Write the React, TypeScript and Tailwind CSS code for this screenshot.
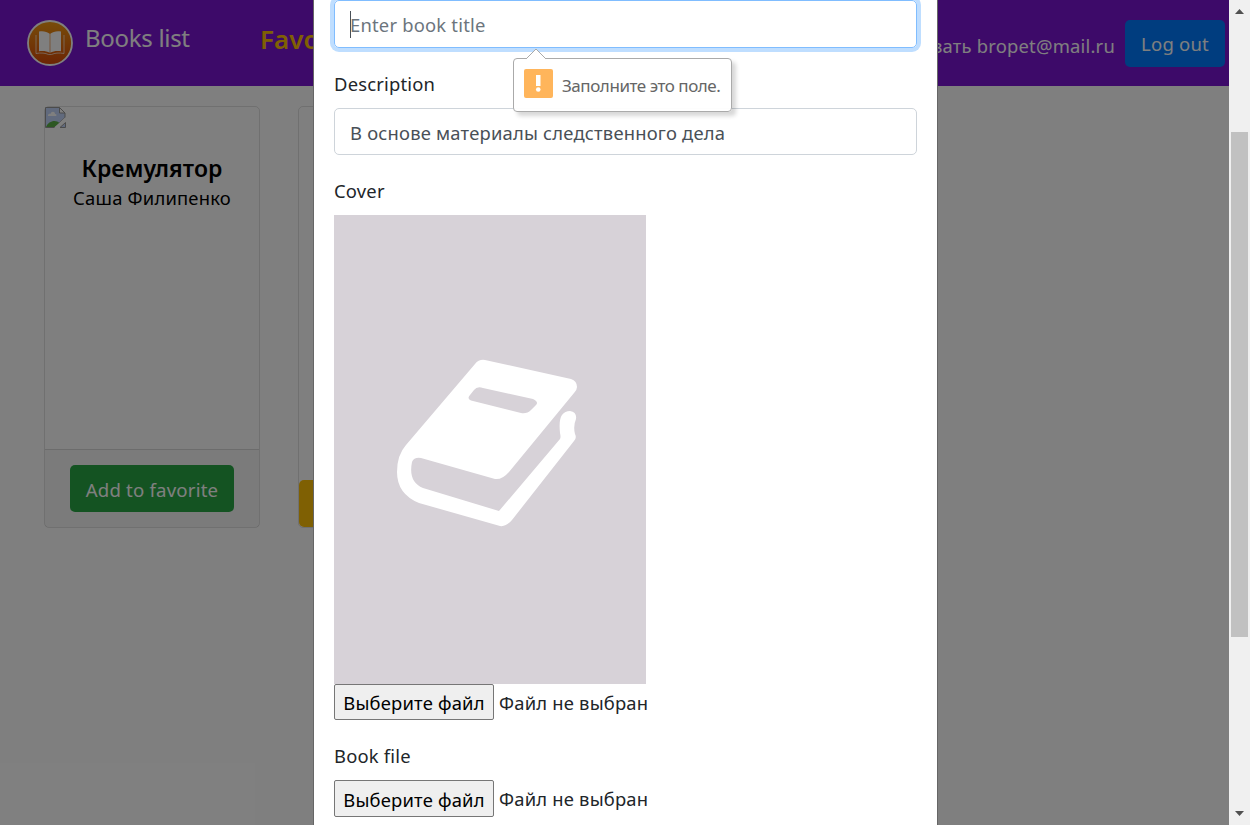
import React from "react";

function Logo() {
  return (
    <svg className="h-[46px] w-[46px] shrink-0" viewBox="0 0 46 46">
      <defs>
        <linearGradient id="logoFill" x1="0" y1="0" x2="0" y2="1">
          <stop offset="0" stopColor="#f09a14" />
          <stop offset="1" stopColor="#d84808" />
        </linearGradient>
      </defs>
      <circle cx="23" cy="23" r="22" fill="url(#logoFill)" stroke="#fff" strokeWidth="1.800" />
      <path d="M9 15v18.500c5-1 9.500-.4 12.500 1h3c3-1.400 7.500-2 12.500-1V15" fill="none" stroke="#fff" strokeWidth=".8" opacity=".8" />
      <path d="M12 11.500c4-.8 8 0 10.700 2.200v19c-3-1.600-7-2.200-10.700-1.400z" fill="#fff" />
      <path d="M34 11.500c-4-.8-8 0-10.700 2.200v19c3-1.600 7-2.200 10.700-1.400z" fill="#fff" />
    </svg>
  );
}

function BrokenImage() {
  return (
    <svg className="block h-[21px] w-[21px]" viewBox="0 0 21 21">
      <path d="M.5.500h14l5.500 5.500v4.500L9 20.500H.500z" fill="#c3d5fb" stroke="#969696" />
      <path d="M14.500.500v5.500H20z" fill="#fff" stroke="#969696" />
      <path d="M3 8.500c0-2 2-2 2.500-1.500C6 4 10 4 10 7c2 0 2 2 .5 2H3z" fill="#fff" />
      <path d="M1 20c2-6 10-8 13.500-4L10 20z" fill="#5aaf46" />
      <path d="M15 20.500h5.500v-5z" fill="#c3d5fb" stroke="#969696" />
      <path d="M10.500 21L21 11.500" stroke="#fff" strokeWidth="2.500" />
    </svg>
  );
}

function Page() {
  return (
    <div className="h-full bg-white">
      <header className="flex h-[86px] bg-[#7b14d3] text-white">
        <div className="shrink-0 pt-5 pl-[27px]">
          <Logo />
        </div>
        <div className="w-[187px] shrink-0 pt-[20px] pl-3 text-[24px] leading-9 tracking-[-0.3px]">Books list</div>
        <div className="pt-[21px] text-[26px] leading-9 font-semibold text-[#ffc107]">Favo</div>
        <div className="ml-auto flex pt-5 pr-1 whitespace-nowrap">
          <span className="mr-[10px] pt-3 text-[18.4px] leading-7 tracking-[0.2px]">Добро пожаловать bropet@mail.ru</span>
          <button className="h-[47px] w-[100px] rounded-[5px] bg-[#007bff] text-[18.5px] tracking-[0.2px]">Log out</button>
        </div>
      </header>
      <main className="flex gap-[38px] pt-5 pl-11">
        <article className="flex h-[422px] w-[216px] flex-col rounded-[5px] border border-black/12 text-center text-black">
          <BrokenImage />
          <div className="flex-1 pt-[25px]">
            <h2 className="text-[23px] leading-[31px] font-semibold tracking-[0.1px]">Кремулятор</h2>
            <p className="text-[18.4px] leading-[28px] tracking-[0.2px]">Саша Филипенко</p>
          </div>
          <footer className="flex h-[78px] items-start justify-center border-t border-black/12 bg-black/[0.03] pt-[15px]">
            <button className="h-[47px] w-[164px] rounded-[5px] bg-[#28a745] pt-[2px] text-[18.6px] tracking-[0.2px] text-white">Add to favorite</button>
          </footer>
        </article>
        <article className="flex h-[422px] w-[216px] flex-col justify-end rounded-[5px] border border-black/12">
          <div className="h-[47px] rounded-[5px] bg-[#ffc107]" />
        </article>
      </main>
    </div>
  );
}

function BookCover() {
  return (
    <div className="h-[469px] w-[312px] bg-[#d7d2d8]">
      <svg className="block h-full w-full" viewBox="0 0 312 469">
        <path
          d="M141 149Q145 144 151 145L237 164Q243 166 243 172Q243 175 240 178L175 257Q168 265 161 264L87 243Q80 242 78 247Q74 267 89 273L165 296L226 224Q227 222 226 218C225 208 226 203 228 200Q231 196 236 196Q243 197 242 204Q239 211 241 219Q243 223 240 226L178 305Q172 312 166 311L85 288Q63 279 63 257Q63 240 72 230Z"
          transform="translate(0 0)"
          fill="#fff"
        />
        <path d="M140 175Q143 171 149 173L199 184Q205 187 202 190L197 195Q193 199 187 198L139 186Q132 184 136 180Z" fill="#d7d2d8" />
      </svg>
    </div>
  );
}

function FilePicker({ tall = false }: { tall?: boolean }) {
  return (
    <div className="flex items-center">
      <button className={`${tall ? "h-[37px] pt-[2px]" : "h-[36px] pt-px"} w-[160px] rounded-[2px] border border-[#767676] bg-[#efefef] text-[18.4px] tracking-[0.2px] whitespace-nowrap text-black`}>
        Выберите файл
      </button>
      <span className={`${tall ? "" : "pt-[2px]"} ml-[5px] text-[18.4px] leading-7 tracking-[0.2px]`}>Файл не выбран</span>
    </div>
  );
}

function ValidationTip() {
  return (
    <div className="absolute top-[58px] left-[199px] flex h-[54px] w-[219px] rounded-[4px] border border-[#aaa] bg-white/95 pt-[10px] pl-[10px] shadow-[4px_4px_4px_rgba(0,0,0,0.16)]">
      <svg className="absolute -top-[11px] left-[11px] h-3 w-[22px]" viewBox="0 0 22 12">
        <path d="M1 12V11L11 1l10 10v1z" fill="#fff" />
        <path d="M1 11L11 1l10 10" fill="none" stroke="#aaa" />
      </svg>
      <svg className="h-[29px] w-[29px]" viewBox="0 0 29 29">
        <rect width="29" height="29" rx="2" fill="#ffb55b" />
        <path d="M12 6h4.500v11H12z" fill="#fff" />
        <circle cx="14.250" cy="20.500" r="2.300" fill="#fff" />
      </svg>
      <span className="pt-[5px] pl-[9px] text-[17px] leading-6 tracking-[-0.45px] whitespace-nowrap text-[#666]">Заполните это поле.</span>
    </div>
  );
}

function BookDialog() {
  return (
    <section className="absolute top-0 left-[313px] h-[825px] w-[625px] overflow-hidden border-x border-[#666] bg-white px-5 text-[18.4px] leading-[29px] tracking-[0.2px] text-[#212529]">
      <div className="flex h-12 items-center rounded-[5px] border border-[#80bdff] pl-[15px] text-[#6c757d] shadow-[0_0_0_4px_#bfdeff]">
        <span className="-mr-px h-[27px] w-px bg-[#495057]" />
        <span className="pt-px">Enter book title</span>
      </div>
      <div className="mt-[21px]">Description</div>
      <div className="mt-[10px] flex h-[47px] items-center rounded-[5px] border border-[#ced4da] pt-px pl-[15px] text-[#495057]">
        В основе материалы следственного дела
      </div>
      <div className="mt-[21px] mb-[10px]">Cover</div>
      <BookCover />
      <FilePicker />
      <div className="mt-[21px] mb-[10px]">Book file</div>
      <FilePicker tall />
      <ValidationTip />
    </section>
  );
}

function Scrollbar() {
  return (
    <div className="flex h-full w-[21px] flex-col items-center justify-between bg-[#f0f0f0]">
      <svg className="h-[132px] w-[21px]" viewBox="0 0 21 132">
        <path d="M6 14h9l-4.500-5z" fill="#505050" />
      </svg>
      <div className="mr-[1px] h-[505px] w-[17px] bg-[#c1c1c1]" />
      <svg className="h-[188px] w-[21px]" viewBox="0 0 21 188">
        <path d="M6 174h9l-4.500 5z" fill="#505050" />
      </svg>
    </div>
  );
}

export default function App() {
  return (
    <div className="flex h-[825px] w-[1250px] overflow-hidden font-['Noto_Sans','Open_Sans',sans-serif]">
      <div className="relative h-full w-[1229px] overflow-hidden">
        <Page />
        <div className="absolute inset-0 bg-black/50" />
        <BookDialog />
      </div>
      <Scrollbar />
    </div>
  );
}
